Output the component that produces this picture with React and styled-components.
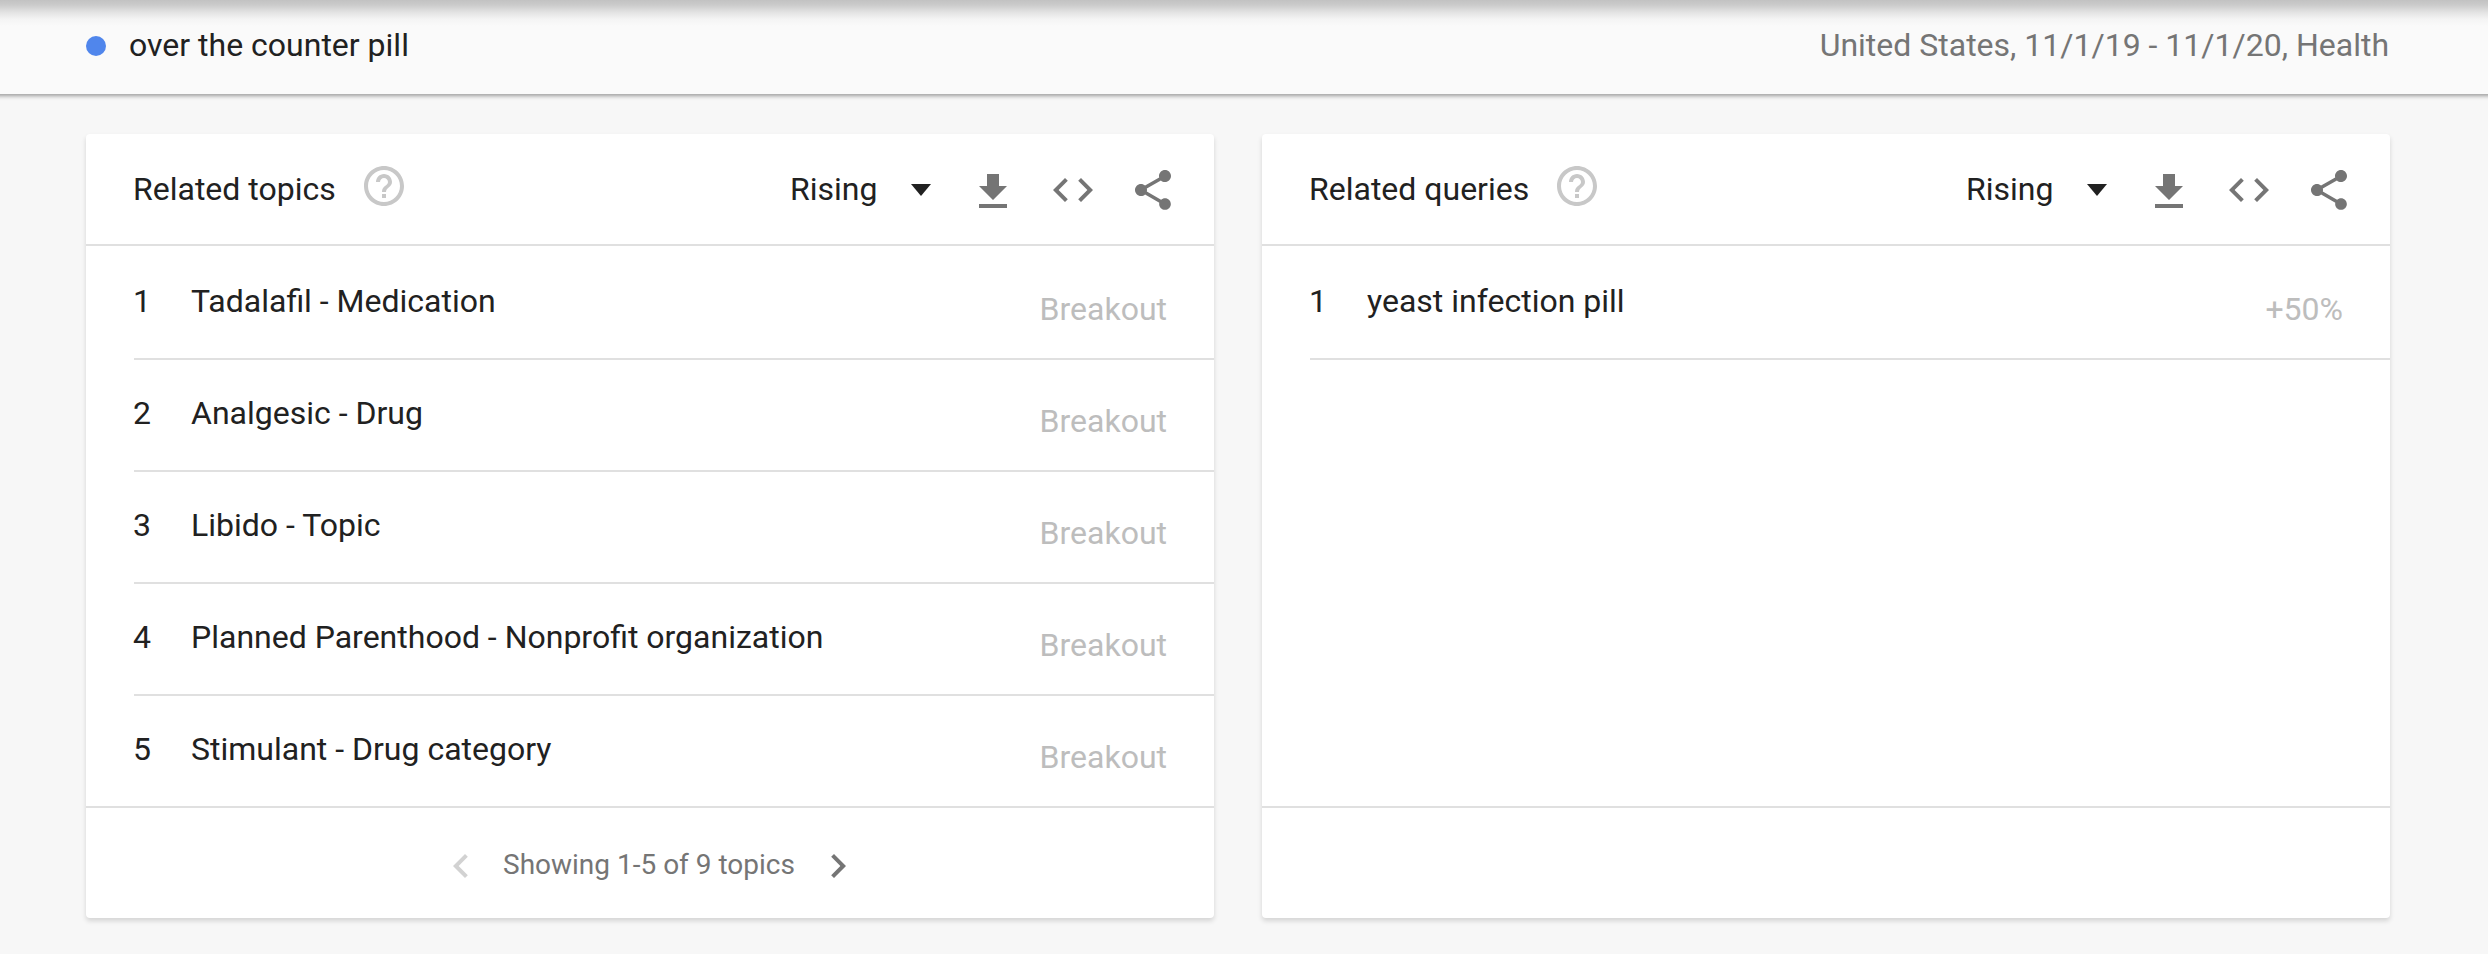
import React from "react";
import styled, { createGlobalStyle } from "styled-components";

const GlobalStyle = createGlobalStyle`
  * { box-sizing: border-box; }
  body {
    margin: 0;
    background: #f7f7f7;
    color: #212121;
    font-family: Roboto, "Liberation Sans", sans-serif;
    font-size: 32px;
    line-height: 40px;
  }
`;

const Page = styled.div`
  min-height: 954px;
  overflow: hidden;
`;

/* Runs past both window edges so its shadow stays even across the full width. */
const TopBar = styled.header`
  display: flex;
  align-items: center;
  height: 94px;
  margin: 0 -10px;
  padding: 0 109px 4px 96px;
  background: linear-gradient(#c2c2c2 0, #cbcbcb 5px, #e2e2e2 12px, #f4f4f4 19px, #fafafa 26px);
  box-shadow: 0 2px 4px rgba(0, 0, 0, 0.37);
`;

const Dot = styled.span`
  width: 20px;
  height: 20px;
  margin: 2px 23px 0 0;
  border-radius: 50%;
  background: #5086ec;
`;

const Meta = styled.span`
  margin-left: auto;
  color: #757575;
`;

const Widgets = styled.main`
  display: grid;
  grid-template-columns: 1128px 1128px;
  gap: 48px;
  padding: 40px 0 0 86px;
`;

const Card = styled.section`
  display: flex;
  flex-direction: column;
  height: 784px;
  border-radius: 4px;
  background: #fff;
  box-shadow: 0 3px 5px rgba(0, 0, 0, 0.14);
`;

const CardHeader = styled.div`
  display: flex;
  flex: none;
  align-items: center;
  height: 112px;
  padding: 0 37px 0 47px;
  border-bottom: 2px solid #e0e0e0;
`;

const Icon = styled.svg`
  display: block;
  flex: none;
  width: 48px;
  height: 48px;
  fill: ${(p) => p.$color || "#757575"};
`;

const HelpIcon = styled(Icon)`
  margin: 0 0 6px 24px;
`;

const Select = styled.div`
  display: flex;
  align-items: center;
  justify-content: space-between;
  width: 141px;
  margin: 0 38px 0 auto;
`;

const Caret = styled.span`
  margin-top: 2px;
  border: solid transparent;
  border-width: 12px 10px 0;
  border-top-color: #212121;
`;

const Actions = styled.div`
  display: flex;
  gap: 32px;
  padding-top: 2px;
`;

const DownloadIcon = styled(Icon)`
  margin: 2px 0 -2px;
`;

const List = styled.ol`
  flex: 1;
  margin: 0;
  padding: 2px 0 0 48px;
  list-style: none;
`;

const Row = styled.li`
  display: flex;
  align-items: center;
  height: ${(p) => (p.$last ? "110px" : "112px")};
  padding: 0 47px 4px 0;
  border-bottom: ${(p) => (p.$last ? "none" : "2px solid #e0e0e0")};
`;

const Rank = styled.span`
  width: 58px;
  margin-left: -1px;
`;

const Value = styled.span`
  margin: 16px 0 0 auto;
  color: #bdbdbd;
`;

const CardFooter = styled.div`
  display: flex;
  flex: none;
  align-items: center;
  height: 112px;
  padding-left: 351px;
  border-top: 2px solid #e0e0e0;
  color: #757575;
  font-size: 28px;
  line-height: 39px;
`;

const PageArrow = styled(Icon)`
  margin-top: 6px;
`;

const PageLabel = styled.span`
  width: 294px;
  margin: 3px 17px 0 18px;
  white-space: nowrap;
`;

const paths = {
  help: "M11 18h2v-2h-2v2zm1-16C6.48 2 2 6.48 2 12s4.48 10 10 10 10-4.48 10-10S17.52 2 12 2zm0 18c-4.41 0-8-3.59-8-8s3.59-8 8-8 8 3.59 8 8-3.59 8-8 8zm0-14c-2.21 0-4 1.79-4 4h2c0-1.1.9-2 2-2s2 .9 2 2c0 2-3 1.75-3 5h2c0-2.25 3-2.5 3-5 0-2.21-1.79-4-4-4z",
  download: "M19 9h-4V3H9v6H5l7 7 7-7zM5 18v2h14v-2H5z",
  code: "M9.4 16.6L4.8 12l4.6-4.6L8 6l-6 6 6 6 1.4-1.4zm5.2 0l4.6-4.6-4.6-4.6L16 6l6 6-6 6-1.4-1.4z",
  share:
    "M18 16.08c-.76 0-1.44.3-1.96.77L8.91 12.7c.05-.23.09-.46.09-.7s-.04-.47-.09-.7l7.05-4.11c.54.5 1.25.81 2.04.81 1.66 0 3-1.34 3-3s-1.34-3-3-3-3 1.34-3 3c0 .24.04.47.09.7L8.04 9.81C7.5 9.31 6.79 9 6 9c-1.66 0-3 1.34-3 3s1.34 3 3 3c.79 0 1.5-.31 2.04-.81l7.12 4.16c-.05.21-.08.43-.08.65 0 1.61 1.31 2.92 2.92 2.92s2.92-1.31 2.92-2.92-1.31-2.92-2.92-2.92z",
  prev: "M15.41 7.41L14 6l-6 6 6 6 1.41-1.41L10.83 12z",
  next: "M10 6L8.59 7.41 13.17 12l-4.58 4.59L10 18l6-6z",
};

const Glyph = ({ as: Component = Icon, name, color }) => (
  <Component viewBox="0 0 24 24" $color={color} aria-hidden="true">
    <path d={paths[name]} />
  </Component>
);

const PAGE_SIZE = 5;

function Widget({ title, items, children }) {
  return (
    <Card>
      <CardHeader>
        <span>{title}</span>
        <Glyph as={HelpIcon} name="help" color="#c8c8c8" />
        <Select>
          <span>Rising</span>
          <Caret />
        </Select>
        <Actions>
          <Glyph as={DownloadIcon} name="download" />
          <Glyph name="code" />
          <Glyph name="share" />
        </Actions>
      </CardHeader>
      <List>
        {items.map(([label, value], i) => (
          <Row key={label} $last={i === PAGE_SIZE - 1}>
            <Rank>{i + 1}</Rank>
            <span>{label}</span>
            <Value>{value}</Value>
          </Row>
        ))}
      </List>
      <CardFooter>{children}</CardFooter>
    </Card>
  );
}

const topics = [
  ["Tadalafil - Medication", "Breakout"],
  ["Analgesic - Drug", "Breakout"],
  ["Libido - Topic", "Breakout"],
  ["Planned Parenthood - Nonprofit organization", "Breakout"],
  ["Stimulant - Drug category", "Breakout"],
];

const queries = [["yeast infection pill", "+50%"]];

export default function App() {
  return (
    <Page>
      <GlobalStyle />
      <TopBar>
        <Dot />
        <span>over the counter pill</span>
        <Meta>United States, 11/1/19 - 11/1/20, Health</Meta>
      </TopBar>
      <Widgets>
        <Widget title="Related topics" items={topics}>
          <Glyph as={PageArrow} name="prev" color="#d2d2d2" />
          <PageLabel>Showing 1-5 of 9 topics</PageLabel>
          <Glyph as={PageArrow} name="next" />
        </Widget>
        <Widget title="Related queries" items={queries} />
      </Widgets>
    </Page>
  );
}
